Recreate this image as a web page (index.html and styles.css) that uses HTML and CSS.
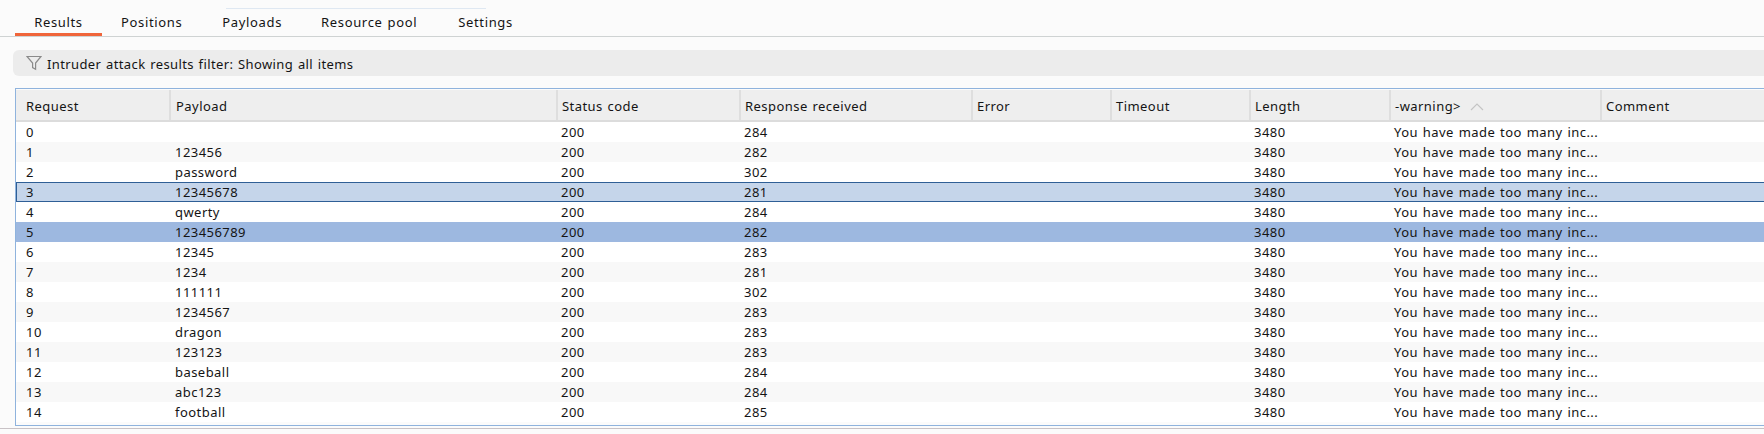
FILE: index.html
```html
<!DOCTYPE html>
<html lang="en">
<head>
<meta charset="utf-8">
<title>Intruder attack results</title>
<link rel="stylesheet" href="styles.css">
</head>
<body>
<div class="top-strip"><div class="strip-line"></div></div>
<nav class="tabs">
  <span class="tab active">Results</span>
  <span class="tab t2">Positions</span>
  <span class="tab t3">Payloads</span>
  <span class="tab t4">Resource pool</span>
  <span class="tab t5">Settings</span>
</nav>
<div class="filter">
  <svg class="funnel" width="16" height="16" viewBox="0 0 16 16"><path d="M1 1.5h14L9.6 8v6.2L6.6 12.6V8z" fill="none" stroke="#8a8a8a" stroke-width="1.2"/></svg>
  <span>Intruder attack results filter: Showing all items</span>
</div>
<div class="results">
<table>
<thead>
<tr><th class="c1">Request</th><th class="c2">Payload</th><th class="c3">Status code</th><th class="c4">Response received</th><th class="c5">Error</th><th class="c6">Timeout</th><th class="c7">Length</th><th class="c8">-warning&gt;<svg class="sort" width="14" height="8" viewBox="0 0 14 8"><path d="M1 7l6-6 6 6" fill="none" stroke="#c4c4c4" stroke-width="1.2"/></svg></th><th class="c9">Comment</th></tr>
</thead>
<tbody>
<tr><td>0</td><td></td><td>200</td><td>284</td><td></td><td></td><td>3480</td><td>You have made too many inc...</td><td></td></tr>
<tr><td>1</td><td>123456</td><td>200</td><td>282</td><td></td><td></td><td>3480</td><td>You have made too many inc...</td><td></td></tr>
<tr><td>2</td><td>password</td><td>200</td><td>302</td><td></td><td></td><td>3480</td><td>You have made too many inc...</td><td></td></tr>
<tr class="focus"><td>3</td><td>12345678</td><td>200</td><td>281</td><td></td><td></td><td>3480</td><td>You have made too many inc...</td><td></td></tr>
<tr><td>4</td><td>qwerty</td><td>200</td><td>284</td><td></td><td></td><td>3480</td><td>You have made too many inc...</td><td></td></tr>
<tr class="selected"><td>5</td><td>123456789</td><td>200</td><td>282</td><td></td><td></td><td>3480</td><td>You have made too many inc...</td><td></td></tr>
<tr><td>6</td><td>12345</td><td>200</td><td>283</td><td></td><td></td><td>3480</td><td>You have made too many inc...</td><td></td></tr>
<tr><td>7</td><td>1234</td><td>200</td><td>281</td><td></td><td></td><td>3480</td><td>You have made too many inc...</td><td></td></tr>
<tr><td>8</td><td>111111</td><td>200</td><td>302</td><td></td><td></td><td>3480</td><td>You have made too many inc...</td><td></td></tr>
<tr><td>9</td><td>1234567</td><td>200</td><td>283</td><td></td><td></td><td>3480</td><td>You have made too many inc...</td><td></td></tr>
<tr><td>10</td><td>dragon</td><td>200</td><td>283</td><td></td><td></td><td>3480</td><td>You have made too many inc...</td><td></td></tr>
<tr><td>11</td><td>123123</td><td>200</td><td>283</td><td></td><td></td><td>3480</td><td>You have made too many inc...</td><td></td></tr>
<tr><td>12</td><td>baseball</td><td>200</td><td>284</td><td></td><td></td><td>3480</td><td>You have made too many inc...</td><td></td></tr>
<tr><td>13</td><td>abc123</td><td>200</td><td>284</td><td></td><td></td><td>3480</td><td>You have made too many inc...</td><td></td></tr>
<tr><td>14</td><td>football</td><td>200</td><td>285</td><td></td><td></td><td>3480</td><td>You have made too many inc...</td><td></td></tr>
</tbody>
</table>
</div>
<div class="bottom-line"></div>
</body>
</html>
```
FILE: styles.css
```css
* { box-sizing: border-box; }
html, body { margin: 0; height: 434px; overflow: hidden; }
body { background: #fbfbfb; color: #141414; font: 13px/20px "Noto Sans", sans-serif; letter-spacing: .45px; word-spacing: 1px; }

.top-strip { height: 9px; padding: 8px 0 0 226px; }
.strip-line { width: 260px; height: 1px; background: #dfe8f2; }

.tabs { display: flex; height: 28px; padding-left: 15px; border-bottom: 1px solid #cfd3d3; letter-spacing: .65px; }
.tab { height: 27px; line-height: 26px; text-align: center; }
.tab.active { width: 87px; border-bottom: 3px solid #f0653a; }
.t2 { margin-left: 19px; }
.t3 { margin-left: 40px; }
.t4 { margin-left: 39px; }
.t5 { margin-left: 41px; }

.filter { display: flex; align-items: center; gap: 5px; height: 26px; margin: 13px 0 0 13px; padding: 2px 0 0 13px; background: #ececec; border-radius: 6px 0 0 6px; letter-spacing: .38px; }
.funnel { flex: none; margin-top: -2px; }

.results { height: 338px; margin: 12px 0 0 15px; border: 1px solid #8fb3dd; border-right: 0; padding-top: 1px; }
table { width: 1749px; table-layout: fixed; border-collapse: collapse; }
th { height: 31px; padding: 2px 0 0 4px; background: #eeeeee; border-right: 2px solid #dedede; border-bottom: 2px solid #dcdcdc; font-weight: 400; text-align: left; }
td { height: 20px; padding: 0 0 0 4px; white-space: nowrap; overflow: hidden; background: #fff; }
.c1 { width: 154px; padding-left: 10px; }
tbody td:first-child { padding-left: 10px; }
.c2, tbody td:nth-child(2) { padding-left: 5px; }
.c2 { width: 387px; }
.c3 { width: 183px; }
.c4 { width: 232px; }
.c5 { width: 139px; }
.c6 { width: 139px; }
.c7 { width: 140px; }
.c8 { width: 211px; }
.c9 { border-right: 0; }
.sort { margin-left: 9px; }

tbody tr:nth-child(even) td { background: #f8f8f8; }
tbody tr.focus td { background: #c5d5ea; box-shadow: inset 0 1px #2f5f96, inset 0 -1px #2f5f96; }
tbody tr.focus td:first-child { box-shadow: inset 0 1px #2f5f96, inset 0 -1px #2f5f96, inset 1px 0 #2f5f96; }
tbody tr.selected td { background: #9db8e0; }

.bottom-line { height: 1px; margin-top: 2px; background: #c8c2c6; }
```
